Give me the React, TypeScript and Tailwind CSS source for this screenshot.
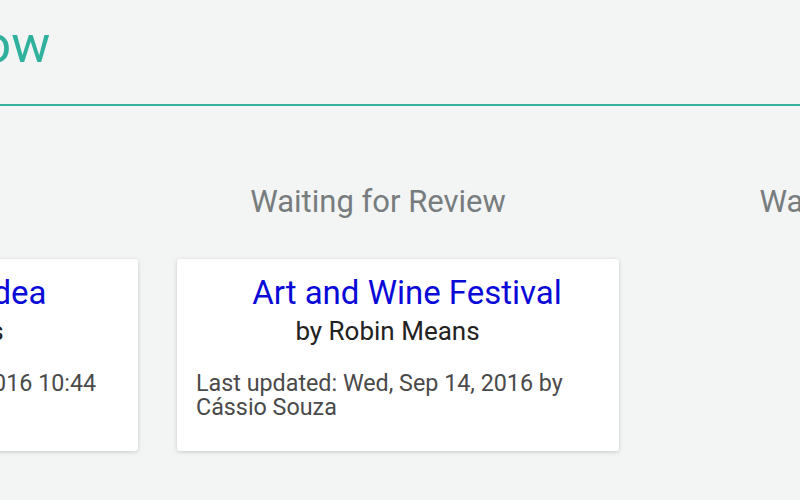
export default function App() {
  return (
    <div
      className="w-[800px] h-[500px] overflow-hidden bg-[#f3f4f4]"
      style={{ fontFamily: "Roboto, 'Noto Sans', sans-serif" }}
    >
      {/* header */}
      <div className="border-b-2 border-[#35b3a0] pt-[19px] pb-[33px]">
        <h1 className="ml-[-167px] text-[52px] leading-[52px] font-normal text-[#2fb19d]">
          Workflow
        </h1>
      </div>

      {/* columns */}
      <div className="mt-[78px] ml-[-304px] flex gap-[39px]">
        <Column
          title="In Progress"
          card={{
            title: "Brand New Idea",
            by: "by Robin Means",
            updated: "Last updated: Fri, Sep 16, 2016 10:44",
            titleClass: "pl-[28px]",
            byClass: "pr-[11px]",
          }}
        />
        <Column
          title="Waiting for Review"
          card={{
            title: "Art and Wine Festival",
            by: "by Robin Means",
            updated: "Last updated: Wed, Sep 14, 2016 by Cássio Souza",
            titleClass: "pl-[18px]",
            byClass: "pr-[21px]",
          }}
        />
        <Column title="Waiting for Print" headingClass="pl-[24px]" />
      </div>
    </div>
  );
}

type CardData = {
  title: string;
  by: string;
  updated: string;
  titleClass: string;
  byClass: string;
};

function Column({
  title,
  card,
  headingClass = "",
}: {
  title: string;
  card?: CardData;
  headingClass?: string;
}) {
  return (
    <div className="w-[442px] shrink-0">
      <h2 className={`pr-[40px] text-center text-[31px] leading-[36px] text-[#777d7e] ${headingClass}`}>
        {title}
      </h2>
      {card && (
        <div className="mt-[39px] h-[192px] rounded-[3px] bg-white px-[19px] pt-[16px] shadow-[0_1px_4px_rgba(0,0,0,0.18)]">
          <div className={`text-center text-[33px] leading-[36px] text-[#0a0ad8] ${card.titleClass}`}>
            {card.title}
          </div>
          <div className={`mt-[5px] text-center text-[26px] leading-[30px] text-[#222222] ${card.byClass}`}>
            {card.by}
          </div>
          <div className="mt-[25px] text-[23.3px] leading-[24px] text-[#4a4a4a]">{card.updated}</div>
        </div>
      )}
    </div>
  );
}
